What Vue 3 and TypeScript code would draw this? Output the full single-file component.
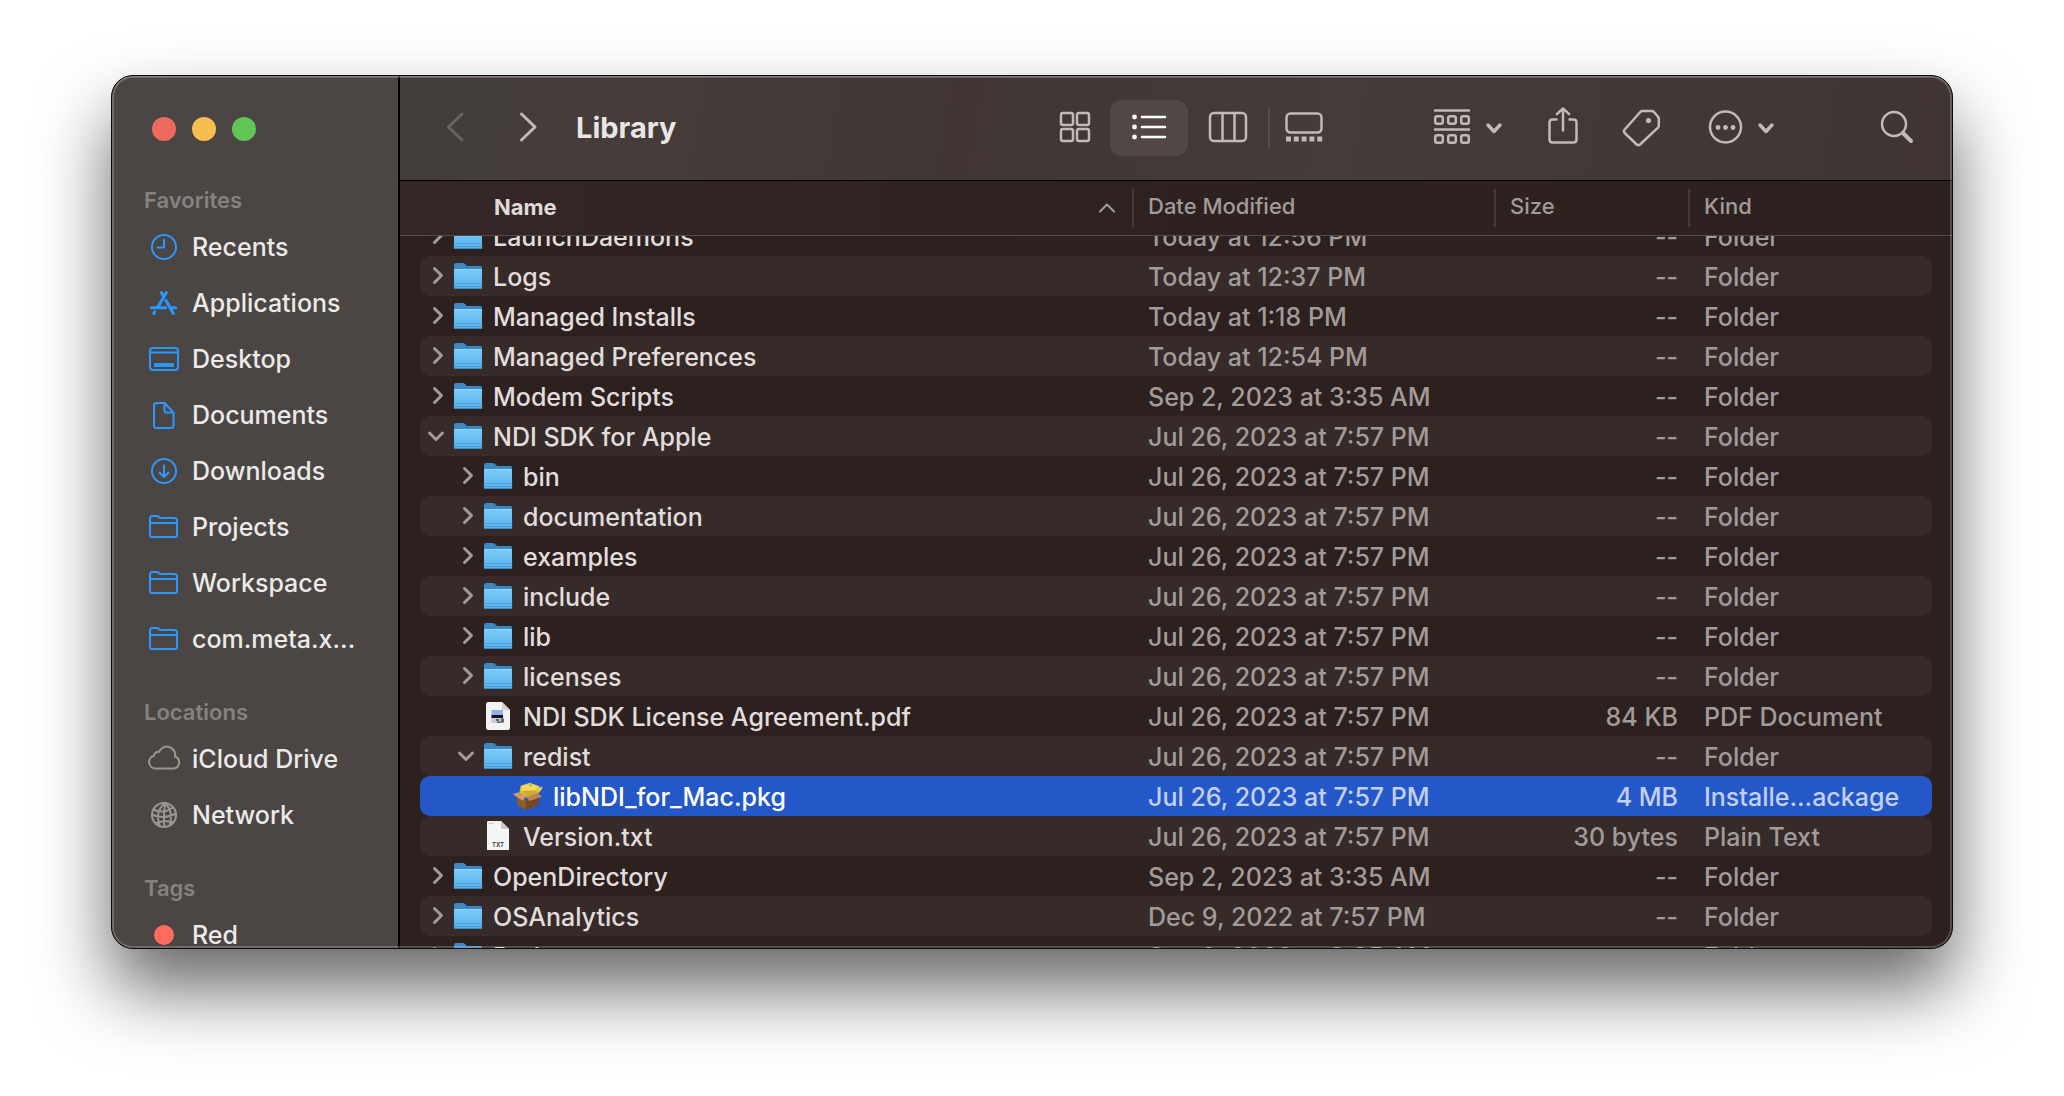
<script setup lang="ts">
import { onMounted, ref } from 'vue'

type EntryIcon = 'folder' | 'pdf' | 'pkg' | 'txt'
type Disclosure = 'closed' | 'open' | 'none'

interface Entry {
  name: string
  depth: number
  icon: EntryIcon
  state: Disclosure
  date: string
  size: string
  kind: string
}

interface Place {
  label: string
  icon: string
}

const JUL = 'Jul 26, 2023 at 7:57 PM'
const SEP = 'Sep 2, 2023 at 3:35 AM'

const folder = (name: string, date: string, depth = 0, state: Disclosure = 'closed'): Entry => ({
  name, depth, icon: 'folder', state, date, size: '--', kind: 'Folder',
})
const file = (name: string, depth: number, icon: EntryIcon, size: string, kind: string): Entry => ({
  name, depth, icon, state: 'none', date: JUL, size, kind,
})

const entries: Entry[] = [
  folder('LaunchDaemons', 'Today at 12:56 PM'),
  folder('Logs', 'Today at 12:37 PM'),
  folder('Managed Installs', 'Today at 1:18 PM'),
  folder('Managed Preferences', 'Today at 12:54 PM'),
  folder('Modem Scripts', SEP),
  folder('NDI SDK for Apple', JUL, 0, 'open'),
  folder('bin', JUL, 1),
  folder('documentation', JUL, 1),
  folder('examples', JUL, 1),
  folder('include', JUL, 1),
  folder('lib', JUL, 1),
  folder('licenses', JUL, 1),
  file('NDI SDK License Agreement.pdf', 1, 'pdf', '84 KB', 'PDF Document'),
  folder('redist', JUL, 1, 'open'),
  file('libNDI_for_Mac.pkg', 2, 'pkg', '4 MB', 'Installe...ackage'),
  file('Version.txt', 1, 'txt', '30 bytes', 'Plain Text'),
  folder('OpenDirectory', SEP),
  folder('OSAnalytics', 'Dec 9, 2022 at 7:57 PM'),
  folder('Perl', SEP),
]

const selected = ref('libNDI_for_Mac.pkg')

const sections: { title: string; places: Place[] }[] = [
  {
    title: 'Favorites',
    places: [
      { label: 'Recents', icon: 'clock' },
      { label: 'Applications', icon: 'apps' },
      { label: 'Desktop', icon: 'screen' },
      { label: 'Documents', icon: 'document' },
      { label: 'Downloads', icon: 'download' },
      { label: 'Projects', icon: 'folder' },
      { label: 'Workspace', icon: 'folder' },
      { label: 'com.meta.x...', icon: 'folder' },
    ],
  },
  {
    title: 'Locations',
    places: [
      { label: 'iCloud Drive', icon: 'cloud' },
      { label: 'Network', icon: 'globe' },
    ],
  },
  { title: 'Tags', places: [{ label: 'Red', icon: 'dot' }] },
]

// The list opens scrolled half a row down.
const list = ref<HTMLElement | null>(null)
onMounted(() => {
  if (list.value) list.value.scrollTop = 20
})
</script>

<template>
  <div class="desktop">
    <div class="window">
      <aside class="sidebar">
        <div class="lights">
          <button class="light close" aria-label="Close"></button>
          <button class="light minimize" aria-label="Minimize"></button>
          <button class="light zoom" aria-label="Zoom"></button>
        </div>
        <nav>
          <section v-for="s in sections" :key="s.title">
            <h2>{{ s.title }}</h2>
            <a v-for="p in s.places" :key="p.label" href="#" class="place">
              <svg class="place-icon" :class="p.icon" viewBox="0 0 40 40" aria-hidden="true">
                <template v-if="p.icon === 'clock'">
                  <circle cx="20" cy="20" r="12" />
                  <path d="M20 12.5V20.5H13.5" />
                </template>
                <path
                  v-else-if="p.icon === 'apps'"
                  class="bold"
                  d="M22.4 9.6 13.6 24.4M17.4 9.6l2.2 3.6M7.4 24.7H21.6M27.2 24.7h4.6M21.8 17.2 29.4 30.4M9.8 30.4l1-1.6"
                />
                <template v-else-if="p.icon === 'screen'">
                  <rect x="6" y="9" width="28" height="22" rx="3" />
                  <path d="M6 13.5H34" />
                  <rect class="solid" x="10" y="24" width="20" height="4" rx="1" />
                </template>
                <path
                  v-else-if="p.icon === 'document'"
                  d="M13 8H20.5L29.5 17.5V30.5Q29.5 33 27 33H13Q10 33 10 30.5V10.5Q10 8 13 8ZM20.5 8.5V15.5Q20.5 17.5 22.5 17.5H29"
                />
                <template v-else-if="p.icon === 'download'">
                  <circle cx="20" cy="20" r="12" />
                  <path d="M20 14.5V25.5M15.5 21.5 20 26l4.5-4.5" />
                </template>
                <path
                  v-else-if="p.icon === 'folder'"
                  d="M6 28V11.5Q6 9 8.5 9H12.5Q14 9 15 10 16 11 17.5 11H30.5Q33 11 33 13.5V28Q33 30 30.5 30H8.5Q6 30 6 28ZM6 16H33"
                />
                <path
                  v-else-if="p.icon === 'cloud'"
                  d="M11.5 29.5A6.5 6.5 0 0 1 10 16.7 5 5 0 0 1 15.2 12.7 8.3 8.3 0 0 1 31 17.5 6.2 6.2 0 0 1 29.5 29.5Z"
                />
                <template v-else-if="p.icon === 'globe'">
                  <circle cx="20" cy="20" r="12" />
                  <path d="M9.5 14.5Q19 19.5 29 12.5M8 19.5Q19 25 32 18.5M11.5 28.5Q20 24.5 29.5 27.5M21.5 8Q10 16 16 31.5M21.5 8Q19 19 20.5 32M21.5 8Q30 18 25.5 30.5" />
                </template>
                <circle v-else class="solid" cx="20" cy="20" r="10" />
              </svg>
              <span>{{ p.label }}</span>
            </a>
          </section>
        </nav>
      </aside>

      <main class="main">
        <header class="toolbar">
          <div class="history">
            <button class="tool back" aria-label="Back">
              <svg viewBox="0 0 40 40"><path d="M27 6 13.5 19 27 32" /></svg>
            </button>
            <button class="tool" aria-label="Forward">
              <svg viewBox="0 0 40 40"><path d="M13.5 6 27 19 13.5 32" /></svg>
            </button>
          </div>
          <h1>Library</h1>

          <div class="views">
            <button class="tool view" aria-label="Icons">
              <svg viewBox="0 0 40 40">
                <rect x="6" y="5" width="12" height="12" rx="2" />
                <rect x="22" y="5" width="12" height="12" rx="2" />
                <rect x="6" y="21" width="12" height="12" rx="2" />
                <rect x="22" y="21" width="12" height="12" rx="2" />
              </svg>
            </button>
            <button class="tool view active" aria-label="List" aria-pressed="true">
              <svg viewBox="0 0 40 40">
                <path d="M13 9H36M13 19H36M13 29H36" />
                <circle class="solid" cx="5.5" cy="9" r="2.4" />
                <circle class="solid" cx="5.5" cy="19" r="2.4" />
                <circle class="solid" cx="5.5" cy="29" r="2.4" />
              </svg>
            </button>
            <button class="tool view" aria-label="Columns">
              <svg viewBox="0 0 40 40">
                <rect x="3" y="5" width="36" height="28" rx="4" />
                <path d="M15.500 5V33M27.500 5V33" />
              </svg>
            </button>
            <span class="divider"></span>
            <button class="tool view" aria-label="Gallery">
              <svg viewBox="0 0 40 40">
                <rect x="1.5" y="5.5" width="35" height="19" rx="4" />
                <path class="solid" d="M1 28.5h5v5h-5zM8.8 28.5h5v5h-5zM16.6 28.5h5v5h-5zM24.4 28.5h5v5h-5zM32.2 28.5h5v5h-5z" />
              </svg>
            </button>
          </div>

          <div class="actions">
            <button class="tool menu" aria-label="Group">
              <svg viewBox="0 0 40 40">
                <path d="M1 2.5H35M1 21.5H35" />
                <rect x="1.2" y="8.2" width="7.6" height="7.6" rx="2" />
                <rect x="14.2" y="8.2" width="7.6" height="7.6" rx="2" />
                <rect x="27.2" y="8.2" width="7.6" height="7.6" rx="2" />
                <rect x="1.2" y="27.2" width="7.6" height="7.6" rx="2" />
                <rect x="14.2" y="27.2" width="7.6" height="7.6" rx="2" />
                <rect x="27.2" y="27.2" width="7.6" height="7.6" rx="2" />
              </svg>
              <svg class="caret" viewBox="0 0 20 20"><path d="M2 7 8 13.5 14 7" /></svg>
            </button>
            <button class="tool" aria-label="Share">
              <svg viewBox="0 0 40 40">
                <path d="M12.5 11.5H8.5Q5.5 11.5 5.5 14.5V31.5Q5.5 34.5 8.5 34.5H29.5Q32.5 34.5 32.5 31.5V14.5Q32.5 11.5 29.5 11.5H25.5" />
                <path d="M19 22.5V1M12.8 6.2 19 0.5 25.2 6.2" />
              </svg>
            </button>
            <button class="tool" aria-label="Tags">
              <svg viewBox="0 0 40 40">
                <path d="M20.5 3H29.5Q31 3 32 4L35.8 8.5Q36.8 9.5 36.8 11V17.5Q36.8 18.8 36 19.7L18 36.5Q16.3 38 14.7 36.5L2.7 25Q1.2 23.2 2.7 21.5L18.3 4Q19.2 3 20.5 3Z" />
                <circle class="solid" cx="26.5" cy="12.5" r="2.6" />
              </svg>
            </button>
            <button class="tool menu more" aria-label="Actions">
              <svg viewBox="0 0 40 40">
                <circle cx="19.5" cy="19" r="15.5" />
                <circle class="solid" cx="12" cy="19.5" r="2.4" />
                <circle class="solid" cx="19.5" cy="19.5" r="2.4" />
                <circle class="solid" cx="27" cy="19.5" r="2.4" />
              </svg>
              <svg class="caret" viewBox="0 0 20 20"><path d="M2 7 8 13.5 14 7" /></svg>
            </button>
            <button class="tool search" aria-label="Search">
              <svg viewBox="0 0 40 40">
                <circle cx="17" cy="16" r="12" />
                <path class="handle" d="M26 25 34 33" />
              </svg>
            </button>
          </div>
        </header>

        <table class="listing">
          <thead>
            <tr>
              <th class="sorted" scope="col">
                Name
                <svg viewBox="0 0 16 10" aria-hidden="true"><path d="M1 8.5 8 1.5 15 8.5" /></svg>
              </th>
              <th scope="col">Date Modified</th>
              <th scope="col">Size</th>
              <th scope="col">Kind</th>
            </tr>
          </thead>
          <tbody ref="list">
            <tr
              v-for="e in entries"
              :key="e.name"
              :class="{ selected: e.name === selected }"
              @click="selected = e.name"
            >
              <td class="name" :style="{ paddingLeft: 4 + e.depth * 30 + 'px' }">
                <span class="twist">
                  <button v-if="e.state !== 'none'" :aria-label="(e.state === 'open' ? 'Collapse ' : 'Expand ') + e.name">
                    <svg viewBox="0 0 24 24">
                      <path v-if="e.state === 'closed'" d="M10.5 4.5 17.5 11.5 10.5 18.5" />
                      <path v-else d="M5.5 9 12 15.5 18.5 9" />
                    </svg>
                  </button>
                </span>
                <svg class="entry-icon" viewBox="0 0 32 32" aria-hidden="true">
                  <template v-if="e.icon === 'folder'">
                    <path fill="#3c87c6" d="M2 5Q2 3 4 3H10.5Q12 3 13 4L14.5 5.5Q15 6 16.5 6H28.5Q30 6 30 7.5V12H2Z" />
                    <rect x="2" y="9" width="28" height="20" rx="1" fill="url(#folder-face)" />
                    <path d="M2 23.5H30M2 26.5H30" stroke="#4a9fd8" stroke-width="1" />
                    <path d="M3 9.5H29" stroke="#8fd8fb" stroke-width="1" />
                    <path d="M2.5 28.5H29.5" stroke="#3a8bc4" stroke-width="1" />
                  </template>
                  <template v-else-if="e.icon === 'pdf'">
                    <path fill="#f3f3f3" d="M6 2H20L28 10V28Q28 30 26 30H6Q4 30 4 28V4Q4 2 6 2Z" />
                    <path fill="#d3d1d1" d="M20 2V8.5Q20 10 21.5 10H28Z" />
                    <rect x="9.5" y="10" width="11.5" height="12" fill="#8fb2e6" />
                    <rect x="9.5" y="15" width="11.5" height="3" fill="#12151f" />
                    <rect x="9.5" y="18" width="11.5" height="5" fill="#c8ccd6" />
                    <path fill="#5f636b" d="M14 19h3v2h-3zM19 18.5h3v4h-3zM15 21.5h4v1.5h-4z" />
                  </template>
                  <template v-else-if="e.icon === 'txt'">
                    <path fill="#f5f5f5" d="M6 1H19L27 9V30H5V2Q5 1 6 1Z" />
                    <path fill="#cbc9c9" d="M19 1V7.5Q19 9 20.5 9H27Z" />
                    <path d="M7 3.5H11" stroke="#c9c9c9" stroke-width="1" />
                    <text x="16" y="27" text-anchor="middle" font-size="6" font-weight="700" fill="#4a4a4a">TXT</text>
                  </template>
                  <template v-else>
                    <path fill="#8a5c2c" d="M4.7 17 14 20V30L5.5 25.5Z" />
                    <path fill="#75481f" d="M14 20 27 16.5 26.5 25 14 30Z" />
                    <path fill="#e3bd35" d="M8.7 5.7 18 2.7 28 6.5 26.3 13.3 14 17.3 7.3 12.7Z" />
                    <path fill="#f1d95c" d="M9.5 6 18 3.2 27 6.8 23 10.5 10 11Z" />
                    <path fill="#cfab30" d="M10 11 23 10.5 25 12 14 16Z" />
                    <path fill="#a8a04c" d="M17 3.5h3v3h-3z" opacity="0.6" />
                    <path fill="#d19a68" d="M6.3 12.3 0.7 14.3 10.7 20.7 14 16.7Z" />
                    <path fill="#bd8450" d="M14 16.7 17.3 21 30 16.7 25.3 12.7Z" />
                    <path fill="#efcf5e" d="M26.5 8.5 30.7 6.5 30 9 26.3 13.3Z" />
                  </template>
                </svg>
                <span class="label">{{ e.name }}</span>
              </td>
              <td>{{ e.date }}</td>
              <td class="size">{{ e.size }}</td>
              <td>{{ e.kind }}</td>
            </tr>
          </tbody>
        </table>
      </main>
    </div>

    <svg class="defs" width="0" height="0" aria-hidden="true">
      <defs>
        <linearGradient id="folder-face" x1="0" y1="0" x2="0" y2="1">
          <stop offset="0" stop-color="#7accf8" />
          <stop offset="1" stop-color="#58b0e8" />
        </linearGradient>
      </defs>
    </svg>
  </div>
</template>

<style>
body {
  background: #fff;
}
</style>

<style scoped>
.desktop {
  box-sizing: border-box;
  height: 100vh;
  padding: 75px 111px 147px;
  overflow: hidden;
  font-family: Inter, "Liberation Sans", sans-serif;
}

.defs {
  position: absolute;
}

.window {
  position: relative;
  box-sizing: border-box;
  display: flex;
  height: 100%;
  border: 1px solid #0a0808;
  border-radius: 22px;
  overflow: hidden;
  background: #2c211f;
  box-shadow: 0 40px 72px rgba(0, 0, 0, 0.6);
}

/* Light rim drawn over the window's content */
.window::after {
  content: "";
  position: absolute;
  inset: 0;
  border-radius: 21px;
  box-shadow:
    inset 0 1px 0 rgba(255, 255, 255, 0.16),
    inset 0 0 0 2px rgba(255, 255, 255, 0.2);
  pointer-events: none;
}

button {
  padding: 0;
  border: 0;
  background: none;
  color: inherit;
  font: inherit;
}

svg {
  display: block;
  fill: none;
  stroke: none;
  stroke-linecap: round;
  stroke-linejoin: round;
}

/* Sidebar */
.sidebar {
  flex: 0 0 286px;
  border-right: 2px solid #000;
  background: #4b4643;
  overflow: hidden;
}

.lights {
  display: flex;
  align-items: center;
  gap: 16px;
  height: 105px;
  padding-left: 40px;
}

.light {
  width: 24px;
  height: 24px;
  border-radius: 50%;
}

.close { background: #ed6a5f; }
.minimize { background: #f5bf4f; }
.zoom { background: #61c554; }

section {
  margin-bottom: 26px;
}

h2 {
  margin: 0;
  padding-left: 32px;
  color: #878280;
  font-size: 22px;
  font-weight: 600;
  line-height: 38px;
}

.place {
  display: flex;
  align-items: center;
  gap: 8px;
  height: 56px;
  padding-left: 32px;
  color: #eceae9;
  font-size: 25px;
  font-weight: 500;
  text-decoration: none;
  white-space: nowrap;
}

.place-icon {
  flex: none;
  width: 40px;
  height: 40px;
  color: #2a98ff;
  stroke: currentColor;
  stroke-width: 2;
}

.place-icon.cloud,
.place-icon.globe {
  color: #9b9694;
}

.place-icon.dot {
  color: #ff6b5f;
}

.place-icon .bold {
  stroke-width: 3;
}

.solid {
  fill: currentColor;
  stroke: none;
}

/* Toolbar */
.main {
  display: flex;
  flex: 1;
  flex-direction: column;
  min-width: 0;
}

.toolbar {
  display: flex;
  flex: none;
  align-items: center;
  height: 104px;
  padding: 0 35px;
  border-bottom: 1px solid #000;
  background: linear-gradient(100deg, #413d3b, #463d3b 14%, #413635 36%, #453b3a 60%, #403534);
  color: #c3b9b7;
}

.tool svg {
  width: 40px;
  height: 40px;
  overflow: visible;
  stroke: currentColor;
  stroke-width: 2.5;
}

.history {
  display: flex;
  gap: 33px;
}

.history svg {
  stroke-width: 3;
}

.back {
  color: #6b6261;
}

h1 {
  margin: 0 0 0 28px;
  color: #e9e6e6;
  font-size: 29px;
  font-weight: 700;
  line-height: 40px;
}

.views {
  display: flex;
  align-items: center;
  margin-left: auto;
}

.view {
  display: grid;
  place-items: center;
  width: 78px;
  height: 56px;
  border-radius: 12px;
}

.view.active {
  background: #514846;
  color: #fff;
}

.divider {
  width: 2px;
  height: 40px;
  margin-left: 2px;
  background: #564c4b;
}

.view:first-child,
.view:last-child {
  width: 70px;
}

.actions {
  display: flex;
  align-items: center;
  gap: 38px;
  margin-left: 94px;
}

.menu {
  display: flex;
  align-items: center;
  gap: 12px;
}

.tool .caret {
  width: 20px;
  height: 20px;
  stroke-width: 3.5;
}

.more {
  margin-left: 6px;
}

.search {
  margin-left: 61px;
}

.handle {
  stroke-width: 4;
}

/* File list */
.listing {
  display: flex;
  flex: 1;
  flex-direction: column;
  min-height: 0;
  color: #a19b99;
  font-size: 25px;
  font-weight: 500;
}

.listing tr {
  display: grid;
  grid-template-columns: minmax(0, 1fr) 362px 194px 244px;
}

thead {
  display: block;
  flex: none;
  border-bottom: 1px solid #574b4a;
  background: linear-gradient(90deg, #332827, #2d2220 50%);
}

thead tr {
  align-items: center;
  height: 54px;
  padding: 0 20px;
}

th {
  height: 38px;
  padding: 0 0 0 14px;
  border-left: 2px solid #463b3a;
  font-size: 22px;
  font-weight: 500;
  line-height: 34px;
  text-align: left;
}

th.sorted {
  display: flex;
  align-items: center;
  justify-content: space-between;
  height: 36px;
  padding: 0 17px 2px 74px;
  border-left: 0;
  color: #e0dbda;
  font-weight: 700;
}

th svg {
  width: 16px;
  height: 10px;
  margin-top: 2px;
  stroke: #a19b99;
  stroke-width: 2;
}

tbody {
  display: block;
  flex: 1;
  min-height: 0;
  padding: 0 20px;
  overflow-y: auto;
  scrollbar-width: none;
}

tbody tr {
  height: 40px;
  border-radius: 10px;
}

tbody tr:nth-child(even) {
  background: #362b29;
}

tbody tr.selected {
  background: #2458c9;
  color: #c3d0f2;
}

td {
  padding: 2px 0 0 16px;
  line-height: 38px;
  white-space: nowrap;
}

td.size {
  padding: 2px 10px 0 0;
  text-align: right;
}

td.name {
  display: flex;
  align-items: center;
  padding: 0;
  color: #e0dddc;
}

.selected td.name {
  color: #fff;
}

.twist {
  flex: none;
  width: 28px;
}

.twist button {
  display: block;
}

.twist svg {
  width: 24px;
  height: 24px;
  stroke: #a19b99;
  stroke-width: 3;
}

.entry-icon {
  flex: none;
  width: 32px;
  height: 32px;
}

.label {
  padding: 2px 0 0 9px;
}
</style>
